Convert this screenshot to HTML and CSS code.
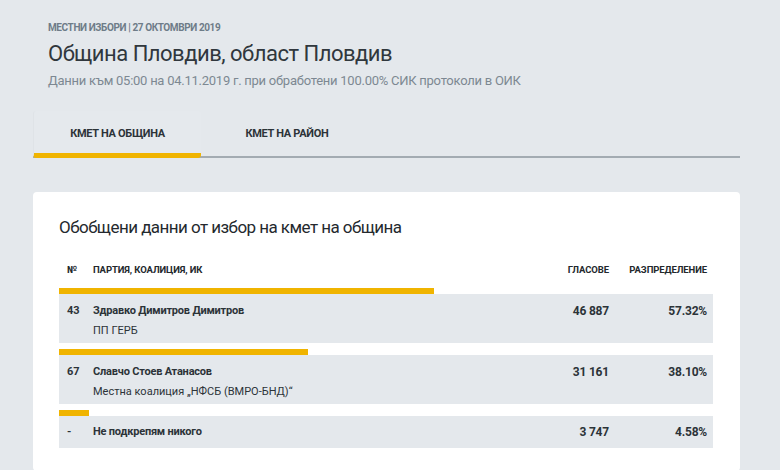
FILE: index.html
```html
<!DOCTYPE html>
<html lang="bg">
<head>
    <meta charset="UTF-8">
    <meta name="viewport" content="width=device-width, initial-scale=1.0">
    <title>Община Пловдив</title>
    <link rel="stylesheet" href="styles.css">
</head>
<body>
    <div class="page">
        <div class="head">
            <div class="head-kicker">Местни избори | 27 октомври 2019</div>
            <h1 class="head-title">Община Пловдив, област Пловдив</h1>
            <div class="head-sub">Данни към 05:00 на 04.11.2019 г. при обработени 100.00% СИК протоколи в ОИК</div>
        </div>

        <div class="tabs">
            <div class="tab active">Кмет на община</div>
            <div class="tab">Кмет на район</div>
        </div>

        <div class="card">
            <h2 class="card-title">Обобщени данни от избор на кмет на община</h2>

            <div class="results">
                <div class="row row-head">
                    <span class="col-num">№</span>
                    <span class="col-name">Партия, коалиция, ИК</span>
                    <span class="col-votes">Гласове</span>
                    <span class="col-pct">Разпределение</span>
                </div>

                <div class="result">
                    <div class="bar" style="width: 57.32%"></div>
                    <div class="row">
                        <span class="col-num">43</span>
                        <span class="col-name">
                            <b>Здравко Димитров Димитров</b>
                            <span class="party">ПП ГЕРБ</span>
                        </span>
                        <span class="col-votes">46 887</span>
                        <span class="col-pct">57.32%</span>
                    </div>
                </div>

                <div class="result">
                    <div class="bar" style="width: 38.10%"></div>
                    <div class="row">
                        <span class="col-num">67</span>
                        <span class="col-name">
                            <b>Славчо Стоев Атанасов</b>
                            <span class="party">Местна коалиция „НФСБ (ВМРО-БНД)“</span>
                        </span>
                        <span class="col-votes">31 161</span>
                        <span class="col-pct">38.10%</span>
                    </div>
                </div>

                <div class="result">
                    <div class="bar" style="width: 4.58%"></div>
                    <div class="row">
                        <span class="col-num">-</span>
                        <span class="col-name"><b>Не подкрепям никого</b></span>
                        <span class="col-votes">3 747</span>
                        <span class="col-pct">4.58%</span>
                    </div>
                </div>
            </div>
        </div>
    </div>
</body>
</html>
```

FILE: styles.css
```css
* {
    box-sizing: border-box;
    margin: 0;
    padding: 0;
}

body {
    font-family: Roboto, "Noto Sans", sans-serif;
    background-color: #e4e8ec;
    color: #2c3338;
}

.page {
    padding: 22px 40px 0 33px;
}

.head {
    padding-left: 15px;
}

.head-kicker {
    font-size: 10px;
    font-weight: bold;
    text-transform: uppercase;
    letter-spacing: -0.4px;
    color: #6e7c88;
    line-height: 12px;
}

.head-title {
    margin-top: 4px;
    font-size: 22px;
    font-weight: 400;
    line-height: 32px;
    color: #30373d;
    letter-spacing: -0.5px;
}

.head-sub {
    margin-top: 2px;
    font-size: 13px;
    color: #7d8892;
    line-height: 18px;
    letter-spacing: -0.25px;
}

.tabs {
    display: flex;
    margin-top: 21px;
    border-bottom: 2px solid #a3abb2;
}

.tab {
    width: 168px;
    text-align: center;
    font-size: 11px;
    font-weight: bold;
    text-transform: uppercase;
    letter-spacing: -0.3px;
    color: #2c3338;
    padding: 16px 0 16px;
}

.tab.active {
    margin-bottom: -2px;
    background: #e5e9ed;
    border-left: 1px solid #dfe3e7;
    border-bottom: 5px solid #f0b400;
    border-radius: 3px;
    padding-bottom: 13px;
}

.tab + .tab {
    width: 172px;
}

.card {
    margin-top: 34px;
    background: #fff;
    border-radius: 4px;
    padding: 24px 27px 17px 26px;
}

.card-title {
    font-size: 17px;
    font-weight: 400;
    line-height: 22px;
    color: #24292e;
    letter-spacing: -0.55px;
}

.results {
    margin-top: 22px;
}

.row {
    display: grid;
    grid-template-columns: 26px 1fr 100px 98px;
    align-items: start;
    padding: 7px 6px 2px 8px;
    background: #e4e8ec;
    font-size: 11px;
    line-height: 20px;
}

.row-head {
    background: none;
    font-size: 9.5px;
    font-weight: bold;
    text-transform: uppercase;
    letter-spacing: -0.1px;
    color: #23282c;
    padding-top: 0;
    padding-bottom: 8px;
}

.row-head .col-num {
    font-size: 10px;
}

.result {
    margin-bottom: 6px;
}

.bar {
    height: 6px;
    background: #f0b400;
}

.col-num {
    font-weight: bold;
}

.result .col-num {
    font-size: 11px;
}

.col-name b {
    display: block;
    letter-spacing: -0.2px;
}

.party {
    display: block;
    color: #2c3338;
}

.col-votes,
.col-pct {
    text-align: right;
    font-weight: bold;
}

.result .col-votes,
.result .col-pct {
    font-size: 12px;
    letter-spacing: -0.2px;
}

.result:last-child .row {
    padding: 6px 6px 6px 8px;
}
```
